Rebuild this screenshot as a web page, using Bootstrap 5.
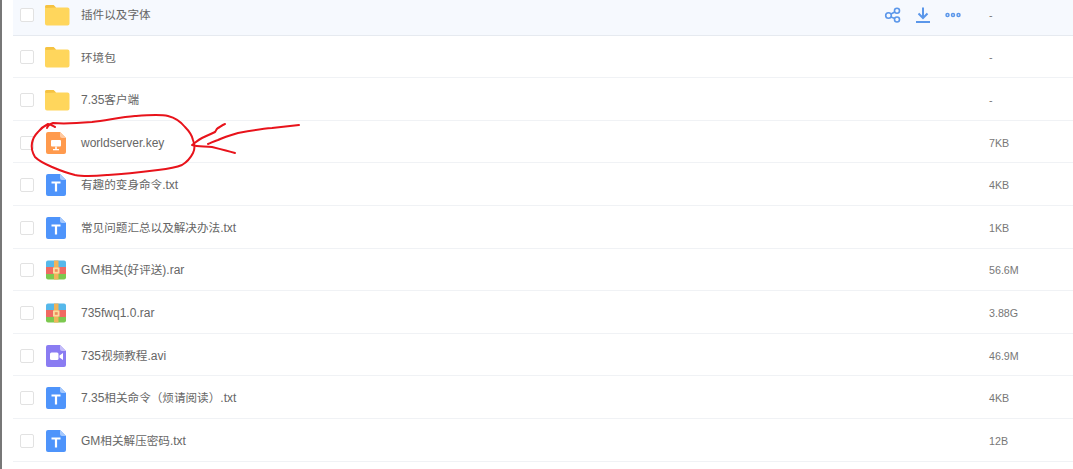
<!DOCTYPE html>
<html lang="en">
<head>
    <meta charset="UTF-8">
    <meta name="viewport" content="width=device-width, initial-scale=1.0">
    <title>File list</title>
    <link href="https://cdn.jsdelivr.net/npm/bootstrap@5.3.3/dist/css/bootstrap.min.css" rel="stylesheet">
    <style>
        html, body { height: 469px; overflow: hidden; background: #fff; }
        body { font-family: "Liberation Sans", "Noto Sans CJK SC", sans-serif; font-size: 12px; color: #666; }
        .page-wrap { border-left: 2px solid #777; height: 469px; padding-left: 11px; overflow: hidden; position: relative; }
        .file-list { margin-top: -7px; border-radius: 0; }
        .file-row { height: 42.6px; padding: 2px 0 0 7px; color: #666; border-color: #f0f2f5; background: transparent; }
        .file-row.hovered { background: #f6f9fe; border-color: #e6eaf0; }
        .row-check { width: 14px; height: 14px; border: 1px solid #e2e2e2; border-radius: 2px; background: #fff; flex: none; margin-right: 11px; }
        .row-icon { width: 26px; height: 26px; flex: none; margin-right: 10px; }
        .row-name { flex: 1 1 auto; white-space: nowrap; }
        .cjk-part { font-size: 11.6px; }
        .row-actions { flex: none; width: 78px; margin-right: 27px; }
        .row-actions svg { width: 18px; height: 18px; }
        .row-size { flex: none; width: 84px; color: #777; font-size: 10.7px; }
        .ink { position: absolute; left: -2px; top: 0; width: 1073px; height: 469px; pointer-events: none; }
    </style>
</head>
<body>
    <svg width="0" height="0" class="d-block position-absolute">
        <defs>
            <symbol id="ico-folder" viewBox="1 0 26 26">
                <path d="M1 5a2 2 0 0 1 2-2h6.500l2.500 2.500h11.500a2 2 0 0 1 2 2v14a2 2 0 0 1-2 2H3a2 2 0 0 1-2-2z" fill="#ffd65c"/>
                <path d="M1 5a2 2 0 0 1 2-2h6.500l2.500 2.500-10 .5z" fill="#f5c242"/>
            </symbol>
            <symbol id="ico-txt" viewBox="2 0 26 26">
                <path d="M5 2h12l6 6v14a2 2 0 0 1-2 2H5a2 2 0 0 1-2-2V4a2 2 0 0 1 2-2z" fill="#4e94fb"/>
                <path d="M17 2l6 6h-4a2 2 0 0 1-2-2z" fill="#a6c9fd"/>
                <path d="M8.500 9.500h9v2h-3.400v8h-2.200v-8H8.500z" fill="#fff"/>
            </symbol>
            <symbol id="ico-key" viewBox="2 0 26 26">
                <path d="M5 2h12l6 6v14a2 2 0 0 1-2 2H5a2 2 0 0 1-2-2V4a2 2 0 0 1 2-2z" fill="#ff9a4d"/>
                <path d="M17 2l6 6h-4a2 2 0 0 1-2-2z" fill="#ffc9a0"/>
                <rect x="8" y="10" width="10" height="6.500" rx="1" fill="#fff"/>
                <rect x="12.200" y="16.500" width="1.600" height="3.500" fill="#fff"/>
                <rect x="10" y="19" width="6" height="1.300" fill="#fff"/>
            </symbol>
            <symbol id="ico-rar" viewBox="2 0 26 26">
                <path d="M3 5.500a2 2 0 0 1 2-2h16a2 2 0 0 1 2 2V10H3z" fill="#56b8ea"/>
                <rect x="3" y="10" width="20" height="7" fill="#ef6a62"/>
                <path d="M3 17h20v3.500a2 2 0 0 1-2 2H5a2 2 0 0 1-2-2z" fill="#7cc84f"/>
                <rect x="11" y="3.500" width="4.500" height="19" fill="#f0b45a"/>
                <rect x="10" y="10.500" width="6.500" height="6" fill="#f9dc9f"/>
                <rect x="11.800" y="12.200" width="2.900" height="2.600" fill="#ef8a5a"/>
            </symbol>
            <symbol id="ico-avi" viewBox="2 0 26 26">
                <path d="M5 2h12l6 6v14a2 2 0 0 1-2 2H5a2 2 0 0 1-2-2V4a2 2 0 0 1 2-2z" fill="#8a7cf2"/>
                <path d="M17 2l6 6h-4a2 2 0 0 1-2-2z" fill="#c5bdf9"/>
                <rect x="7" y="9.500" width="8.500" height="7.500" rx="1.500" fill="#fff"/>
                <path d="M16.500 12.500l3.500-2.500v7l-3.500-2.500z" fill="#fff"/>
            </symbol>
        </defs>
    </svg>

    <div class="page-wrap">
        <div class="list-group list-group-flush file-list">
            <div class="list-group-item file-row hovered d-flex align-items-center">
                <span class="row-check"></span>
                <svg class="row-icon"><use href="#ico-folder"/></svg>
                <span class="row-name cjk-part">插件以及字体</span>
                <span class="row-actions d-flex align-items-center justify-content-between">
                    <svg viewBox="0 0 18 18" fill="none" stroke="#5b97ea" stroke-width="1.600">
                        <circle cx="4.500" cy="9.500" r="2.800"/><circle cx="13" cy="4.800" r="2.500"/><circle cx="13" cy="13.500" r="2.500"/>
                        <path d="M7 8l3.800-2M7 11l3.800 1.500"/>
                    </svg>
                    <svg viewBox="0 0 18 18" fill="none" stroke="#5b97ea" stroke-width="2">
                        <path d="M9 1.500v10M4.500 7.500L9 12l4.500-4.500M2 16h14"/>
                    </svg>
                    <svg viewBox="0 0 18 18" fill="none" stroke="#5b97ea" stroke-width="1.500">
                        <circle cx="3.500" cy="9" r="1.500"/><circle cx="9" cy="9" r="1.500"/><circle cx="14.500" cy="9" r="1.500"/>
                    </svg>
                </span>
                <span class="row-size">-</span>
            </div>
            <div class="list-group-item file-row d-flex align-items-center">
                <span class="row-check"></span>
                <svg class="row-icon"><use href="#ico-folder"/></svg>
                <span class="row-name cjk-part">环境包</span>
                <span class="row-size">-</span>
            </div>
            <div class="list-group-item file-row d-flex align-items-center">
                <span class="row-check"></span>
                <svg class="row-icon"><use href="#ico-folder"/></svg>
                <span class="row-name">7.35<span class="cjk-part">客户端</span></span>
                <span class="row-size">-</span>
            </div>
            <div class="list-group-item file-row d-flex align-items-center">
                <span class="row-check"></span>
                <svg class="row-icon"><use href="#ico-key"/></svg>
                <span class="row-name">worldserver.key</span>
                <span class="row-size">7KB</span>
            </div>
            <div class="list-group-item file-row d-flex align-items-center">
                <span class="row-check"></span>
                <svg class="row-icon"><use href="#ico-txt"/></svg>
                <span class="row-name"><span class="cjk-part">有趣的变身命令</span>.txt</span>
                <span class="row-size">4KB</span>
            </div>
            <div class="list-group-item file-row d-flex align-items-center">
                <span class="row-check"></span>
                <svg class="row-icon"><use href="#ico-txt"/></svg>
                <span class="row-name"><span class="cjk-part">常见问题汇总以及解决办法</span>.txt</span>
                <span class="row-size">1KB</span>
            </div>
            <div class="list-group-item file-row d-flex align-items-center">
                <span class="row-check"></span>
                <svg class="row-icon"><use href="#ico-rar"/></svg>
                <span class="row-name">GM<span class="cjk-part">相关</span>(<span class="cjk-part">好评送</span>).rar</span>
                <span class="row-size">56.6M</span>
            </div>
            <div class="list-group-item file-row d-flex align-items-center">
                <span class="row-check"></span>
                <svg class="row-icon"><use href="#ico-rar"/></svg>
                <span class="row-name">735fwq1.0.rar</span>
                <span class="row-size">3.88G</span>
            </div>
            <div class="list-group-item file-row d-flex align-items-center">
                <span class="row-check"></span>
                <svg class="row-icon"><use href="#ico-avi"/></svg>
                <span class="row-name">735<span class="cjk-part">视频教程</span>.avi</span>
                <span class="row-size">46.9M</span>
            </div>
            <div class="list-group-item file-row d-flex align-items-center">
                <span class="row-check"></span>
                <svg class="row-icon"><use href="#ico-txt"/></svg>
                <span class="row-name">7.35<span class="cjk-part">相关命令（烦请阅读）</span>.txt</span>
                <span class="row-size">4KB</span>
            </div>
            <div class="list-group-item file-row d-flex align-items-center">
                <span class="row-check"></span>
                <svg class="row-icon"><use href="#ico-txt"/></svg>
                <span class="row-name">GM<span class="cjk-part">相关解压密码</span>.txt</span>
                <span class="row-size">12B</span>
            </div>
            <div class="list-group-item file-row d-flex align-items-center"></div>
        </div>

        <!-- hand drawn circle and arrow on top of the list -->
        <svg class="ink" viewBox="0 0 1073 469" fill="none" stroke="#e8131b" stroke-width="2" stroke-linecap="round" stroke-linejoin="round">
            <path d="M47 128C48 125 50 124 53 123C65 124 80 123 92 122C108 120 122 117 135 116C148 115 160 114 168 116C176 118 181 122 185 127C190 132 192 135 193 140C195 145 195 149 193 153C190 159 187 162 182 165C175 168 167 169 158 170C142 172 125 174 108 175C96 176 85 177 75 175C67 173 59 170 52 167C45 164 39 161 35 157C32 152 31 148 32 143C33 138 35 135 38 132C41 128 44 126 48 124C50 124 53 126 55 127"/>
            <path d="M299 125C290 126 281 127 272 128C260 129 249 131 238 133C231 135 224 137 218 140C214 141 211 143 208 144"/>
            <path d="M225 124C222 125 220 127 218 128C216 129 216 131 215 132C211 134 206 136 202 138C198 140 195 143 192 145C198 147 205 146 212 147C220 149 228 151 235 153"/>
        </svg>
    </div>
</body>
</html>
